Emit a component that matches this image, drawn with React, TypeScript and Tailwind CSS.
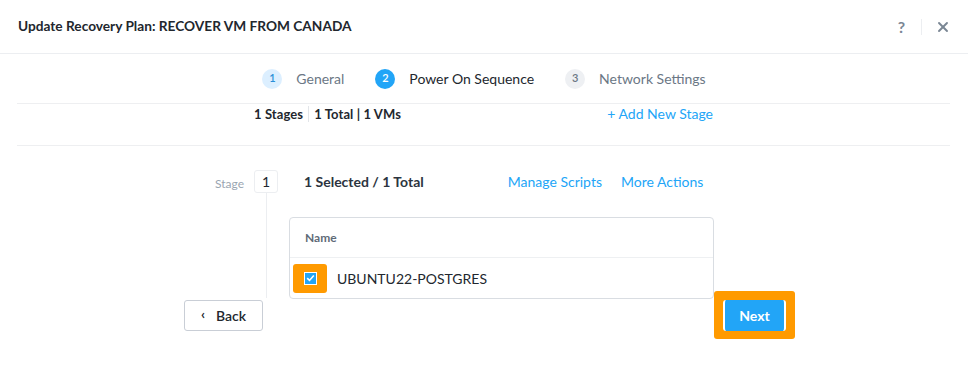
import { X } from "lucide-react";

const Step = ({ n, label, state }: { n: number; label: string; state: "done" | "active" | "todo" }) => {
  const circle =
    state === "active"
      ? "bg-[#22a5f7] text-white"
      : state === "done"
      ? "bg-[#dcefff] text-[#2a8fd8]"
      : "bg-[#eef0f3] text-[#6b7785]";
  const text = state === "active" ? "text-[#22272e]" : "text-[#6b7785]";
  return (
    <div className="flex items-center">
      <div className={`w-[20px] h-[20px] rounded-full flex items-center justify-center text-[11px] font-semibold ${circle}`}>
        {n}
      </div>
      <span className={`ml-[14px] text-[14px] ${text}`}>{label}</span>
    </div>
  );
};

export default function App() {
  return (
    <div className="w-[968px] h-[367px] bg-white overflow-hidden text-[#22272e]" style={{ fontFamily: "Lato, 'Open Sans', sans-serif" }}>
      {/* header */}
      <div className="h-[54px] border-b border-[#eceef1] flex items-center justify-between pl-[18px] pr-[17px]">
        <h1 className="text-[13.7px] font-bold">Update Recovery Plan: RECOVER VM FROM CANADA</h1>
        <div className="flex items-center">
          <span className="text-[16px] font-bold text-[#7a8694]">?</span>
          <div className="w-px h-[16px] bg-[#eceef1] ml-[16px] mr-[13px]" />
          <X size={16} strokeWidth={2.8} className="text-[#7a8694]" />
        </div>
      </div>

      {/* stepper */}
      <div className="h-[49px] flex items-center justify-center gap-[31px]">
        <Step n={1} label="General" state="done" />
        <Step n={2} label="Power On Sequence" state="active" />
        <Step n={3} label="Network Settings" state="todo" />
      </div>

      {/* stats */}
      <div className="mx-[17px] w-[933px] h-[43px] border-y border-[#eeeff1] flex items-start">
        <div className="ml-[237px] -mt-[1px] w-[459px] h-[22px] flex items-center justify-between leading-[20px]">
          <div className="flex items-center text-[13px] font-bold tracking-[0.1px]">
            <span>1 Stages</span>
            <span className="w-px h-[16px] bg-[#e2e5e9] mx-[5px]" />
            <span>1 Total | 1 VMs</span>
          </div>
          <span className="text-[14px] text-[#22a5f7]">+ Add New Stage</span>
        </div>
      </div>

      {/* stage */}
      <div className="flex pt-[24px]">
        <div className="w-[244px] flex justify-end pt-[5px]">
          <span className="text-[12px] text-[#9aa5b1]">Stage</span>
        </div>
        <div className="ml-[10px] flex flex-col items-center w-[24px]">
          <div className="w-[24px] h-[23px] border border-[#eceef1] rounded-[3px] flex items-center justify-center text-[14px]">1</div>
          <div className="w-px h-[105px] bg-[#eceef1]" />
        </div>
        <div className="flex-1">
          <div className="flex items-center h-[23px]">
            <span className="ml-[26px] text-[14px] font-bold text-[#2c3440]">1 Selected / 1 Total</span>
            <span className="ml-[84px] text-[14px] text-[#22a5f7]">Manage Scripts</span>
            <span className="ml-[19px] text-[14px] text-[#22a5f7]">More Actions</span>
          </div>
          <div className="ml-[11px] mt-[24px] w-[425px] border border-[#d9dde2] rounded-[4px]">
            <div className="h-[40px] border-b border-[#eef0f2] flex items-center pl-[15px] text-[12px] font-bold text-[#5f6b78]">Name</div>
            <div className="h-[40px] flex items-center">
              <div className="ml-[3px] w-[34px] h-[29px] bg-[#ff9a00] rounded-[3px] flex items-center justify-center">
                <div className="w-[13px] h-[13px] bg-[#22a5f7] border border-white flex items-center justify-center">
                  <svg width="9" height="8" viewBox="0 0 9 8">
                    <path d="M1.2 4.2 L3.5 6.4 L7.8 1.4" fill="none" stroke="white" strokeWidth="1.6" />
                  </svg>
                </div>
              </div>
              <span className="ml-[10px] text-[14px] text-[#22272e]">UBUNTU22-POSTGRES</span>
            </div>
          </div>
        </div>
      </div>

      {/* footer */}
      <div className="-mt-[8px] ml-[184px] w-[611px] flex items-center justify-between">
        <button className="w-[79px] h-[31px] border border-[#c9ced6] rounded-[3px] bg-white flex items-center justify-center text-[14px] font-semibold text-[#22272e]">
          <span className="text-[14px] font-bold mr-[11px] -mt-[3px]">‹</span>Back
        </button>
        <div className="w-[81px] h-[48px] bg-[#ff9a00] rounded-[3px] flex items-center justify-center">
          <button className="w-[63px] h-[31px] bg-[#22a5f7] border-x-2 border-white rounded-[3px] text-white text-[14px] font-bold">
            Next
          </button>
        </div>
      </div>
    </div>
  );
}
